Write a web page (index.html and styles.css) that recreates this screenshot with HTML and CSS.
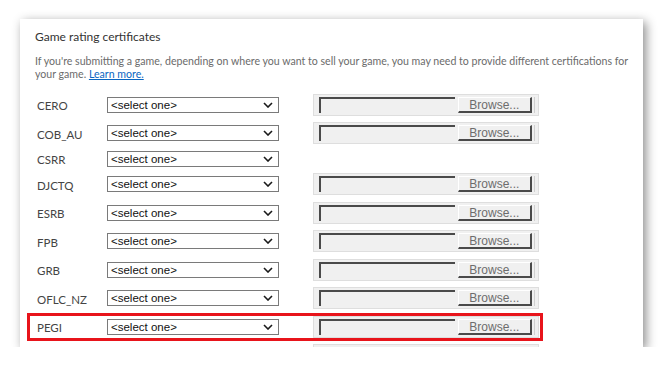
FILE: index.html
```html
<!DOCTYPE html>
<html lang="en">
<head>
    <meta charset="UTF-8">
    <meta name="viewport" content="width=device-width, initial-scale=1.0">
    <title>Game rating certificates</title>
    <link rel="stylesheet" href="styles.css">
</head>
<body>
    <div class="card">
        <div class="intro">
            <h2>Game rating certificates</h2>
            <p>If you're submitting a game, depending on where you want to sell your game, you may need to provide different certifications for your game. <a href="#">Learn more.</a></p>
        </div>

        <div class="ratings">
            <div class="rating-row">
                <label>CERO</label>
                <div class="picker"><select><option>&lt;select one&gt;</option></select><svg class="chev" viewBox="0 0 10 6" width="10" height="6"><path d="M1 1l4 4 4-4" fill="none" stroke="#1a1a1a" stroke-width="1.6"/></svg></div>
                <div class="file"><span class="file-text"></span><span class="file-btn">Browse...</span></div>
            </div>
            <div class="rating-row">
                <label>COB_AU</label>
                <div class="picker"><select><option>&lt;select one&gt;</option></select><svg class="chev" viewBox="0 0 10 6" width="10" height="6"><path d="M1 1l4 4 4-4" fill="none" stroke="#1a1a1a" stroke-width="1.6"/></svg></div>
                <div class="file"><span class="file-text"></span><span class="file-btn">Browse...</span></div>
            </div>
            <div class="rating-row">
                <label>CSRR</label>
                <div class="picker"><select><option>&lt;select one&gt;</option></select><svg class="chev" viewBox="0 0 10 6" width="10" height="6"><path d="M1 1l4 4 4-4" fill="none" stroke="#1a1a1a" stroke-width="1.6"/></svg></div>
            </div>
            <div class="rating-row">
                <label>DJCTQ</label>
                <div class="picker"><select><option>&lt;select one&gt;</option></select><svg class="chev" viewBox="0 0 10 6" width="10" height="6"><path d="M1 1l4 4 4-4" fill="none" stroke="#1a1a1a" stroke-width="1.6"/></svg></div>
                <div class="file"><span class="file-text"></span><span class="file-btn">Browse...</span></div>
            </div>
            <div class="rating-row">
                <label>ESRB</label>
                <div class="picker"><select><option>&lt;select one&gt;</option></select><svg class="chev" viewBox="0 0 10 6" width="10" height="6"><path d="M1 1l4 4 4-4" fill="none" stroke="#1a1a1a" stroke-width="1.6"/></svg></div>
                <div class="file"><span class="file-text"></span><span class="file-btn">Browse...</span></div>
            </div>
            <div class="rating-row">
                <label>FPB</label>
                <div class="picker"><select><option>&lt;select one&gt;</option></select><svg class="chev" viewBox="0 0 10 6" width="10" height="6"><path d="M1 1l4 4 4-4" fill="none" stroke="#1a1a1a" stroke-width="1.6"/></svg></div>
                <div class="file"><span class="file-text"></span><span class="file-btn">Browse...</span></div>
            </div>
            <div class="rating-row">
                <label>GRB</label>
                <div class="picker"><select><option>&lt;select one&gt;</option></select><svg class="chev" viewBox="0 0 10 6" width="10" height="6"><path d="M1 1l4 4 4-4" fill="none" stroke="#1a1a1a" stroke-width="1.6"/></svg></div>
                <div class="file"><span class="file-text"></span><span class="file-btn">Browse...</span></div>
            </div>
            <div class="rating-row">
                <label>OFLC_NZ</label>
                <div class="picker"><select><option>&lt;select one&gt;</option></select><svg class="chev" viewBox="0 0 10 6" width="10" height="6"><path d="M1 1l4 4 4-4" fill="none" stroke="#1a1a1a" stroke-width="1.6"/></svg></div>
                <div class="file"><span class="file-text"></span><span class="file-btn">Browse...</span></div>
            </div>
            <!-- highlighted row -->
            <div class="rating-row highlight">
                <label>PEGI</label>
                <div class="picker"><select><option>&lt;select one&gt;</option></select><svg class="chev" viewBox="0 0 10 6" width="10" height="6"><path d="M1 1l4 4 4-4" fill="none" stroke="#1a1a1a" stroke-width="1.6"/></svg></div>
                <div class="file"><span class="file-text"></span><span class="file-btn">Browse...</span></div>
            </div>
            <!-- next row, clipped by the card -->
            <div class="rating-row">
                <label></label>
                <div class="picker"></div>
                <div class="file"><span class="file-text"></span><span class="file-btn"></span></div>
            </div>
        </div>
    </div>
</body>
</html>
```

FILE: styles.css
```css
body {
    margin: 0;
    padding: 0;
    background-color: #fff;
    font-family: Lato, 'Open Sans', sans-serif;
}
.card {
    box-sizing: border-box;
    width: 623px;
    height: 328px;
    margin: 19px 0 0 20px;
    padding: 10px 7px 0 7px;
    background-color: #fff;
    box-shadow: 3px 3px 10px rgba(0, 0, 0, 0.45);
    overflow: hidden;
}
.intro {
    padding-left: 8px;
}
.intro h2 {
    margin: 0;
    font-size: 12px;
    line-height: 16px;
    font-weight: normal;
    color: #333;
}
.intro p {
    margin: 9.5px 0 0 0;
    font-size: 10.6px;
    line-height: 13px;
    color: #6b6b6b;
}
.intro a {
    color: #0a66c2;
    text-decoration: underline;
}
.ratings {
    margin-top: 10px;
}
.rating-row {
    display: grid;
    grid-template-columns: 70px 172px 260px;
    align-items: center;
    width: 502px;
    padding: 3.25px 4px 3.25px 10px;
}
.rating-row.highlight {
    outline: 3px solid #e8141b;
    outline-offset: -3px;
}
.rating-row label {
    padding-top: 2px;
    font-size: 11.5px;
    color: #444;
}
.picker {
    position: relative;
    height: 16px;
}
.picker select {
    appearance: none;
    -webkit-appearance: none;
    display: block;
    box-sizing: border-box;
    width: 100%;
    height: 16px;
    margin: 0;
    padding: 0 0 0 3px;
    border: 1px solid #7a7a7a;
    border-radius: 0;
    background-color: #fff;
    font-family: 'Liberation Sans', Arial, sans-serif;
    font-size: 11.5px;
    line-height: 14px;
    color: #111;
}
.chev {
    position: absolute;
    right: 6px;
    top: 5px;
}
.file {
    display: flex;
    box-sizing: border-box;
    height: 22px;
    margin-left: 34px;
    padding: 2px 3px 2px 5px;
    background-color: #f0f0f0;
    border: 1px solid #dedede;
}
.file-text {
    box-sizing: border-box;
    width: 137px;
    border-top: 2px solid #4a4a4a;
    border-left: 2px solid #4a4a4a;
}
.file-btn {
    box-sizing: border-box;
    width: 75px;
    margin-left: 3px;
    border: 1px solid;
    border-color: #fff #4a4a4a #4a4a4a #fff;
    border-width: 1px 2px 2px 1px;
    font-family: 'Liberation Sans', Arial, sans-serif;
    font-size: 12px;
    line-height: 15px;
    color: #6d6d6d;
    text-align: center;
}
.file::after {
    content: '';
    width: 1px;
    margin-left: 2px;
    background-color: #cfcfcf;
}
```
